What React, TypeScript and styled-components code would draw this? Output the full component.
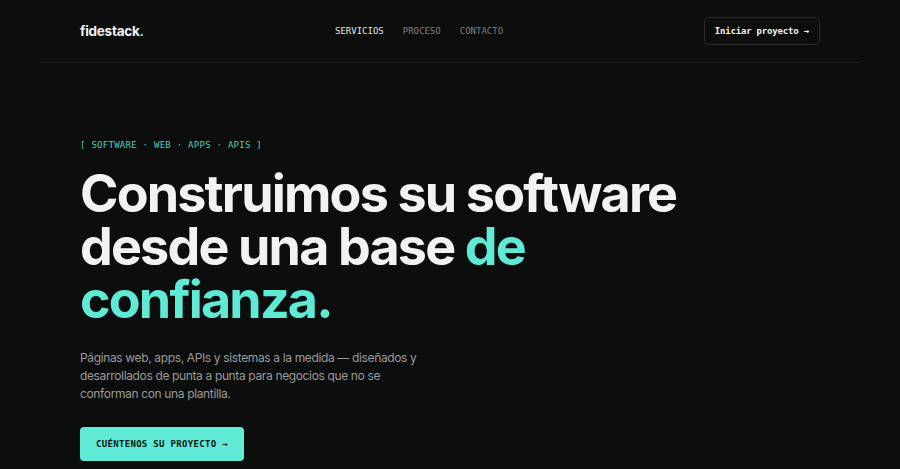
import React from "react";
import styled, { createGlobalStyle } from "styled-components";

const Global = createGlobalStyle`
  html, body { margin: 0; padding: 0; background: #0c0d0d; }
  body { font-family: "Inter", "Liberation Sans", sans-serif; color: #f2f2f0; }
  * { box-sizing: border-box; }
`;

const Page = styled.div`
  min-height: 469px;
  background: #0c0d0d;
  padding: 0 40px;
  overflow: hidden;
`;

const Header = styled.header`
  height: 63px;
  padding: 0 40px;
  border-bottom: 1px solid #1e2020;
  display: flex;
  align-items: center;
`;

const Logo = styled.div`
  flex: 0 0 255px;
  font-family: "Inter", sans-serif;
  font-weight: 700;
  font-size: 13.5px;
  letter-spacing: -0.02em;
  color: #f2f2f0;
  span { color: #5eead4; }
`;

const Nav = styled.nav`
  display: flex;
  gap: 19px;
`;

const Spacer = styled.div`
  flex: 1;
`;

const NavLink = styled.a<{ $active?: boolean }>`
  font-family: "DejaVu Sans Mono", "Liberation Mono", monospace;
  font-size: 9px;
  letter-spacing: 0;
  text-transform: uppercase;
  color: ${(p) => (p.$active ? "#e4e4e2" : "#7e807f")};
  text-decoration: none;
`;

const OutlineButton = styled.button`
  height: 28px;
  padding: 0 10px;
  border: 1px solid #2a2c2c;
  border-radius: 5px;
  background: transparent;
  color: #f2f2f0;
  font-family: "DejaVu Sans Mono", "Liberation Mono", monospace;
  font-weight: 700;
  font-size: 9px;
  letter-spacing: -0.02em;
`;

const Hero = styled.section`
  padding: 76px 40px 0;
  display: flex;
  flex-direction: column;
  align-items: flex-start;
`;

const Tag = styled.div`
  font-family: "DejaVu Sans Mono", "Liberation Mono", monospace;
  font-size: 9px;
  letter-spacing: 0.03em;
  color: #52cdb7;
  line-height: 12px;
`;

const Title = styled.h1`
  margin: 16px 0 0;
  font-family: "Inter", sans-serif;
  font-weight: 700;
  font-size: 52px;
  line-height: 53px;
  letter-spacing: -0.035em;
  color: #f2f2f0;
  span { color: #5eead4; }
`;

const Lead = styled.p`
  margin: 23px 0 0;
  max-width: 360px;
  font-family: "Inter", sans-serif;
  font-size: 12px;
  line-height: 18px;
  color: #9a9b9a;
  letter-spacing: -0.03em;
`;

const PrimaryButton = styled.button`
  margin-top: 24px;
  height: 34px;
  padding: 0 16px;
  border: none;
  border-radius: 4px;
  background: #5eead4;
  color: #0c1413;
  font-family: "DejaVu Sans Mono", "Liberation Mono", monospace;
  font-weight: 700;
  font-size: 9px;
  letter-spacing: 0.035em;
`;

export default function App() {
  return (
    <>
      <Global />
      <Page>
        <Header>
          <Logo>
            fidestack<span>.</span>
          </Logo>
          <Nav>
            <NavLink $active>Servicios</NavLink>
            <NavLink>Proceso</NavLink>
            <NavLink>Contacto</NavLink>
          </Nav>
          <Spacer />
          <OutlineButton>Iniciar proyecto →</OutlineButton>
        </Header>
        <Hero>
          <Tag>[ SOFTWARE · WEB · APPS · APIS ]</Tag>
          <Title>
            Construimos su software
            <br />
            desde una base <span>de</span>
            <br />
            <span>confianza.</span>
          </Title>
          <Lead>
            Páginas web, apps, APIs y sistemas a la medida — diseñados y
            <br />
            desarrollados de punta a punta para negocios que no se
            <br />
            conforman con una plantilla.
          </Lead>
          <PrimaryButton>CUÉNTENOS SU PROYECTO →</PrimaryButton>
        </Hero>
      </Page>
    </>
  );
}
